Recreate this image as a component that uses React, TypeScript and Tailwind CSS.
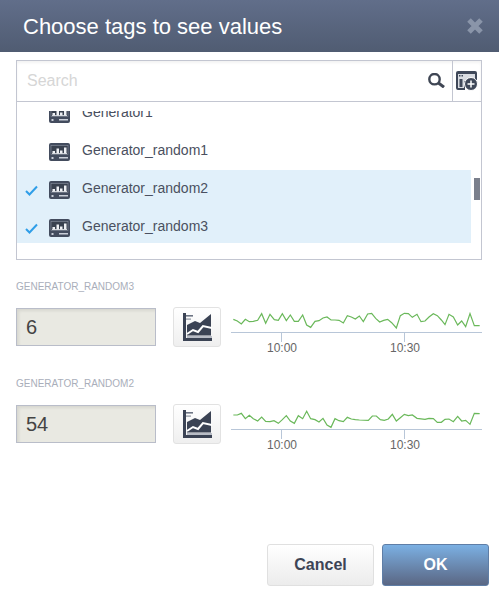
import React from "react";

type Point = [number, number];

const series3: Point[] = [
  [25, 73], [37, 78], [49, 87], [61, 73], [73, 80], [85, 79], [98, 76], [110, 56], [122, 85], [135, 58],
  [148, 74], [160, 76], [172, 56], [184, 77], [196, 60], [208, 79], [220, 79], [233, 60], [245, 90], [257, 97],
  [270, 79], [282, 77], [294, 69], [306, 66], [318, 75], [330, 75], [342, 76], [355, 84], [367, 62], [379, 66],
  [391, 72], [403, 63], [415, 80], [428, 57], [440, 55], [452, 70], [464, 81], [476, 76], [488, 73], [500, 83],
  [514, 99], [526, 62], [538, 55], [550, 56], [562, 67], [576, 58], [588, 80], [600, 78], [612, 66], [625, 56],
  [637, 62], [649, 75], [660, 89], [672, 58], [685, 66], [698, 90], [710, 78], [722, 95], [735, 56], [748, 92],
  [764, 92],
];

const series2: Point[] = [
  [25, 60], [37, 60], [49, 55], [61, 71], [73, 61], [85, 71], [98, 78], [110, 66], [122, 79], [135, 80],
  [147, 77], [160, 85], [172, 74], [184, 62], [196, 78], [208, 85], [220, 62], [233, 71], [245, 49], [257, 71],
  [270, 74], [282, 81], [294, 70], [306, 90], [318, 97], [330, 71], [342, 77], [355, 80], [367, 67], [379, 72],
  [391, 74], [403, 75], [430, 76], [442, 63], [454, 63], [466, 74], [478, 76], [490, 72], [502, 58], [514, 78],
  [526, 68], [538, 58], [550, 62], [562, 60], [576, 70], [600, 73], [612, 70], [625, 71], [637, 82], [649, 82],
  [660, 73], [672, 72], [685, 80], [698, 64], [710, 78], [722, 76], [735, 88], [748, 55], [764, 56],
];

function TagIcon() {
  return (
    <svg width="21" height="18" viewBox="0 0 21 18" className="shrink-0">
      <rect x="0" y="0" width="21" height="18" rx="2" fill="#434c5e" />
      <rect x="2" y="2.5" width="17" height="9" fill="#39414f" stroke="#8b92a0" strokeWidth="0.6" />
      <rect x="3.5" y="8" width="2.5" height="2.5" fill="#eef0f4" />
      <rect x="7.5" y="5.5" width="2.5" height="5" fill="#eef0f4" />
      <rect x="11" y="7.5" width="2.5" height="3" fill="#eef0f4" />
      <rect x="15" y="4.5" width="2.5" height="6" fill="#eef0f4" />
      <rect x="3" y="10.2" width="15" height="0.8" fill="#eef0f4" />
      <rect x="2.5" y="14" width="2" height="2" fill="#c9ced8" />
      <rect x="10" y="14" width="9" height="1.5" fill="#c9ced8" />
    </svg>
  );
}

function Check() {
  return (
    <svg width="13" height="11" viewBox="0 0 13 11">
      <path d="M1 6 L4.5 9.5 L12 1.5" fill="none" stroke="#2f9ee8" strokeWidth="2" />
    </svg>
  );
}

function ChartIcon() {
  return (
    <svg width="29" height="28" viewBox="0 0 29 28">
      <rect x="0" y="0" width="3" height="28" fill="#3b4354" />
      <rect x="0" y="25" width="29" height="3" fill="#3b4354" />
      <rect x="3" y="2" width="7" height="1.6" fill="#6d7483" />
      <rect x="3" y="5.5" width="5" height="1.2" fill="#8e94a0" />
      <path d="M4 12 L12 8 L17 10 L28 1 V22.5 H4 Z" fill="#3b4354" />
      <path d="M4 21 L10 17 L15 19 L20 13 L29 15" fill="none" stroke="#ffffff" strokeWidth="2" />
      <rect x="4" y="23" width="25" height="2" fill="#b9bdc6" />
    </svg>
  );
}

function Spark({ points, shift }: { points: Point[]; shift: number }) {
  const line = points.map(([x, y]) => `${x / 3},${(y - shift) / 3}`).join(" ");
  return (
    <svg width="264" height="48" viewBox="0 0 264 48" className="ml-1 shrink-0">
      <polyline points={line} fill="none" stroke="#6ab85a" strokeWidth="1.2" />
      <line x1="6" y1="25.5" x2="257" y2="25.5" stroke="#b8c6d8" />
      <line x1="56.5" y1="25" x2="56.5" y2="35" stroke="#b8c6d8" />
      <line x1="179.5" y1="25" x2="179.5" y2="35" stroke="#b8c6d8" />
      <text x="57" y="45" textAnchor="middle" fontSize="12" fill="#666666" fontFamily="'Liberation Sans', sans-serif">10:00</text>
      <text x="180" y="45" textAnchor="middle" fontSize="12" fill="#666666" fontFamily="'Liberation Sans', sans-serif">10:30</text>
    </svg>
  );
}

function TagValue({ name, value, points, shift, top }: { name: string; value: string; points: Point[]; shift: number; top: string }) {
  return (
    <div className={top}>
      <div className="h-3 text-[10px] leading-3 text-[#a9aeba]">{name}</div>
      <div className="mt-[14px] flex h-12 items-start">
        <div className="mt-px flex h-[38px] w-[140px] shrink-0 items-center border border-[#b9bdc9] bg-[#e9e9e2] pl-[9px] text-[20px] text-[#444444] shadow-[inset_2px_2px_3px_rgba(0,0,0,0.08)]">
          {value}
        </div>
        <div className="ml-[17px] flex h-10 w-12 shrink-0 items-center justify-center rounded-[3px] border border-[#e2e2e2] bg-gradient-to-b from-white to-[#efefef]">
          <ChartIcon />
        </div>
        <Spark points={points} shift={shift} />
      </div>
    </div>
  );
}

function Row({ label, selected }: { label: string; selected?: boolean }) {
  return (
    <div className={`flex h-[38px] shrink-0 items-center ${selected ? "bg-[#e1f0fa]" : ""}`}>
      <div className="flex w-8 shrink-0 items-center pl-2 pt-[3px]">{selected && <Check />}</div>
      <div className="mt-px"><TagIcon /></div>
      <span className="-mt-[2px] ml-3 text-sm text-[#4a5060]">{label}</span>
    </div>
  );
}

export default function App() {
  return (
    <div className="h-[605px] w-[499px] overflow-hidden bg-white font-['Liberation_Sans',sans-serif]">
      <div className="flex h-[52px] items-center justify-between bg-gradient-to-b from-[#616e8a] to-[#505c72] pl-[23px] pr-[15px]">
        <h1 className="text-[22px] text-white">Choose tags to see values</h1>
        <svg width="18" height="18" viewBox="0 0 18 18">
          <path d="M3 3 L15 15 M15 3 L3 15" stroke="#8a95a9" strokeWidth="5" />
        </svg>
      </div>

      <div className="px-4 pt-2">
        <div className="w-[466px] border border-[#c3c6d1]">
          <div className="flex h-[41px] border-b border-[#c3c6d1] shadow-[inset_0_2px_3px_rgba(0,0,0,0.05)]">
            <input
              placeholder="Search"
              className="min-w-0 flex-1 bg-transparent pl-[10px] text-base outline-none placeholder:text-[#d6d6d6]"
            />
            <svg width="17" height="15" viewBox="0 0 17 15" className="mr-[7px] mt-[12px] shrink-0">
              <circle cx="6.5" cy="6.2" r="5.2" fill="none" stroke="#3f4654" strokeWidth="2.4" />
              <path d="M10.5 10 L16 14.2" stroke="#3f4654" strokeWidth="3" />
            </svg>
            <div className="flex w-[29px] shrink-0 justify-center border-l border-[#c3c6d1] pt-[10px]">
              <svg width="22" height="20" viewBox="0 0 22 20">
                <path d="M2 0 H19 A2 2 0 0 1 21 2 V9 H12 L9 12 V19 H2 A2 2 0 0 1 0 17 V2 A2 2 0 0 1 2 0 Z" fill="#3f4859" />
                <rect x="2" y="3" width="17" height="7" fill="#d9dce2" />
                <rect x="2" y="3" width="6" height="14" fill="#d9dce2" />
                <rect x="3" y="4" width="1.5" height="1.5" fill="#3f4859" />
                <rect x="5.5" y="4" width="1.5" height="1.5" fill="#3f4859" />
                <rect x="3.5" y="8" width="3" height="8" fill="#3f4859" />
                <circle cx="15" cy="13" r="6.5" fill="#3f4859" stroke="#ffffff" />
                <path d="M15 9.5 V16.5 M11.5 13 H18.5" stroke="#ffffff" strokeWidth="1.5" />
              </svg>
            </div>
          </div>
          <div className="flex h-[141px]">
            <div className="w-[454px] shrink-0 pt-[9px]">
              <div className="flex h-full flex-col overflow-hidden">
                <div className="-mt-[17px] flex flex-col">
                  <Row label="Generator1" />
                  <Row label="Generator_random1" />
                  <Row label="Generator_random2" selected />
                  <Row label="Generator_random3" selected />
                </div>
              </div>
            </div>
            <div className="ml-[3px] mt-[76px] h-[22px] w-[6px] bg-[#7a7f8c]" />
          </div>
          <div className="h-4" />
        </div>

        <TagValue name="GENERATOR_RANDOM3" value="6" points={series3} shift={36} top="mt-[21px]" />
        <TagValue name="GENERATOR_RANDOM2" value="54" points={series2} shift={27} top="mt-[23px]" />
      </div>

      <div className="mt-[92px] flex justify-end gap-2 pr-[10px]">
        <button className="h-[42px] w-[107px] rounded-[3px] border border-[#e0e0e0] bg-gradient-to-b from-white to-[#ececec] text-base font-bold text-[#3d4456]">
          Cancel
        </button>
        <button className="h-[42px] w-[107px] rounded-[3px] border border-[#5f7ea6] bg-gradient-to-b from-[#7bb0e3] to-[#5a6784] text-base font-bold text-white">
          OK
        </button>
      </div>
    </div>
  );
}
